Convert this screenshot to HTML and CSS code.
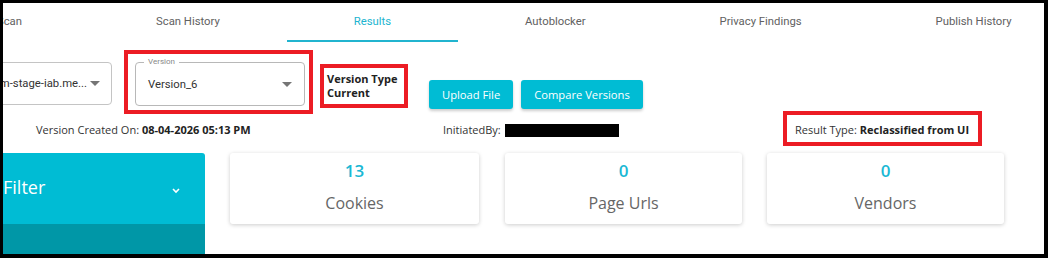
FILE: index.html
```html
<!DOCTYPE html>
<html lang="en">
<head>
  <meta charset="UTF-8">
  <meta name="viewport" content="width=device-width, initial-scale=1.0">
  <title>Scan Results</title>
  <link rel="stylesheet" href="styles.css">
</head>
<body>

  <div class="frame">

    <!-- Tabs -->
    <nav class="tabs">
      <div class="tab">Scan</div>
      <div class="tab">Scan History</div>
      <div class="tab active">Results</div>
      <div class="tab">Autoblocker</div>
      <div class="tab">Privacy Findings</div>
      <div class="tab">Publish History</div>
    </nav>

    <!-- Domain / version toolbar -->
    <div class="toolbar">
      <div class="select domain-select">
        <span class="select-value">ccm-stage-iab.me...</span>
        <span class="caret"></span>
      </div>

      <div class="select version-select marked">
        <span class="select-label">Version</span>
        <span class="select-value">Version_6</span>
        <span class="caret"></span>
      </div>

      <div class="version-type marked">
        <div>Version Type</div>
        <div>Current</div>
      </div>

      <div class="actions">
        <button class="btn">Upload File</button>
        <button class="btn">Compare Versions</button>
      </div>
    </div>

    <!-- Scan info -->
    <div class="info-row">
      <div>Version Created On: <b>08-04-2026 05:13 PM</b></div>
      <div class="initiated">InitiatedBy: <span class="redacted"></span></div>
      <div><span class="result-type marked">Result Type: <b>Reclassified from UI</b></span></div>
    </div>

    <!-- Filter + counts -->
    <div class="stats-row">
      <div class="filter">
        <div class="filter-head">
          <span class="filter-title">Filter</span>
          <svg width="10" height="7" viewBox="0 0 10 7"><path d="M2 2 L5 5 L8 2" fill="none" stroke="#fff" stroke-width="1.6"/></svg>
        </div>
        <div class="filter-body"></div>
      </div>

      <div class="card card-wide">
        <div class="count">13</div>
        <div class="count-label">Cookies</div>
      </div>
      <div class="card">
        <div class="count">0</div>
        <div class="count-label">Page Urls</div>
      </div>
      <div class="card">
        <div class="count">0</div>
        <div class="count-label">Vendors</div>
      </div>
    </div>

  </div>

</body>
</html>
```

FILE: styles.css
```css
/* Page */
body {
  margin: 0;
  background: #000;
  font-family: 'Open Sans', sans-serif;
  color: #333;
}

.frame {
  margin: 3px 4px 4px 3px;
  height: 251px;
  background: #fff;
  overflow: hidden;
}

/* Tabs */
.tabs {
  display: flex;
  margin-left: -73px;
  font-family: Roboto, sans-serif;
  font-size: 11.3px;
}

.tab {
  padding: 0 67px;
  height: 37px;
  line-height: 37px;
  color: #616161;
  white-space: nowrap;
  border-bottom: 2px solid transparent;
}

.tab.active {
  color: #21b4cf;
  border-bottom-color: #21b4cf;
}

/* Red annotation boxes */
.marked {
  position: relative;
}

.marked::after {
  content: "";
  position: absolute;
  border: 4px solid #ec1c24;
  pointer-events: none;
}

/* Toolbar */
.toolbar {
  display: flex;
  align-items: flex-start;
  margin-top: 20px;
  height: 44px;
}

.select {
  display: flex;
  align-items: center;
  box-sizing: border-box;
  height: 44px;
  border: 1px solid #c4c4c4;
  border-radius: 4px;
  font-family: Roboto, sans-serif;
  font-size: 11.3px;
  color: #333;
}

.domain-select {
  justify-content: flex-end;
  width: 169px;
  margin-left: -60px;
  padding-right: 11px;
  gap: 3px;
  height: 43px;
}

.version-select {
  width: 170px;
  margin-left: 23px;
  padding: 0 12px;
  justify-content: space-between;
  border-color: #b8b8b8;
}

.version-select::after {
  top: -13px;
  left: -12px;
  right: -9px;
  bottom: -9px;
}

.select-label {
  position: absolute;
  top: -6px;
  left: 8px;
  padding: 0 4px;
  background: #fff;
  font-size: 8px;
  color: #888;
}

.caret {
  width: 0;
  height: 0;
  border-left: 5px solid transparent;
  border-right: 5px solid transparent;
  border-top: 5px solid #757575;
}

.version-type {
  width: 80px;
  margin: 10px 0 0 22px;
  font-size: 11px;
  font-weight: 700;
  line-height: 14px;
  color: #222;
}

.version-type::after {
  top: -8px;
  left: -7px;
  right: -1px;
  bottom: -8px;
}

.actions {
  display: flex;
  gap: 8px;
  margin: 18px 0 0 22px;
}

.btn {
  height: 29px;
  padding: 0 13px;
  border: none;
  border-radius: 3px;
  background: #00bcd4;
  color: #fff;
  font-family: 'Open Sans', sans-serif;
  font-size: 11.2px;
  box-shadow: 0 2px 3px rgba(0, 0, 0, 0.2);
}

/* Info row */
.info-row {
  display: grid;
  grid-template-columns: 407px 352px auto;
  margin-top: 16px;
  padding-left: 33px;
  font-size: 11px;
  line-height: 16px;
  color: #333;
}

.info-row b {
  color: #222;
}

.redacted {
  display: inline-block;
  width: 114px;
  height: 13px;
  margin-left: 1px;
  vertical-align: -3px;
  background: #000;
}

.result-type {
  display: inline-block;
}

.result-type::after {
  top: -11px;
  left: -12px;
  right: -13px;
  bottom: -8px;
}

/* Filter + cards */
.stats-row {
  display: flex;
  align-items: flex-start;
  gap: 25px;
  margin-top: 15px;
}

.filter {
  width: 202px;
  flex-shrink: 0;
}

.filter-head {
  display: flex;
  align-items: center;
  justify-content: space-between;
  box-sizing: border-box;
  height: 71px;
  padding: 0 24px 4px 0;
  background: #00bcd4;
  border-top-right-radius: 3px;
  color: #fff;
  font-size: 18px;
}

.filter-head svg {
  margin-top: 8px;
}

.filter-body {
  height: 40px;
  background: #0097a7;
}

.card {
  box-sizing: border-box;
  width: 237px;
  height: 71px;
  padding-top: 6px;
  border-radius: 3px;
  background: #fff;
  box-shadow: 0 1px 4px rgba(0, 0, 0, 0.2);
  text-align: center;
}

.card-wide {
  width: 249px;
  margin-right: 1px;
}

.count {
  font-size: 17px;
  font-weight: 600;
  line-height: 24px;
  color: #1ab8d4;
}

.count-label {
  margin-top: 10px;
  font-size: 16px;
  line-height: 20px;
  color: #666;
}
```
